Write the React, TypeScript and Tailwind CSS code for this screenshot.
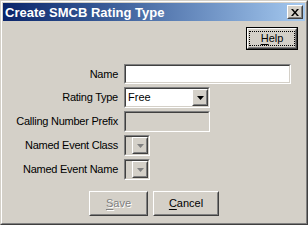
const FONT = "font-['Liberation_Sans',Arial,sans-serif]";

function Raised({ className = '', children }: { className?: string; children?: React.ReactNode }) {
  return (
    <div className={`border border-t-white border-l-white border-r-[#404040] border-b-[#404040] bg-[#d4d0c8] ${className}`}>
      <div className="h-full w-full border border-t-[#d4d0c8] border-l-[#d4d0c8] border-r-[#808080] border-b-[#808080] flex items-center justify-center">
        {children}
      </div>
    </div>
  );
}

function Sunken({ className = '', bg = 'bg-white', children }: { className?: string; bg?: string; children?: React.ReactNode }) {
  return (
    <div className={`border border-t-[#808080] border-l-[#808080] border-r-white border-b-white ${className}`}>
      <div className={`h-full w-full border border-t-[#404040] border-l-[#404040] border-r-[#d4d0c8] border-b-[#d4d0c8] flex items-center ${bg}`}>
        {children}
      </div>
    </div>
  );
}

function Arrow({ disabled = false }: { disabled?: boolean }) {
  return (
    <svg width="7" height="4" viewBox="0 0 7 4">
      <path d="M0 0H7L3.5 4Z" fill={disabled ? '#808080' : '#000'} />
    </svg>
  );
}

function Label({ children }: { children: React.ReactNode }) {
  return <span className="text-right text-[11px] tracking-[-0.25px] text-black leading-none">{children}</span>;
}

export default function App() {
  return (
    <div className={`${FONT} w-[308px] h-[225px] bg-[#d4d0c8] border border-t-[#d4d0c8] border-l-[#d4d0c8] border-r-[#404040] border-b-[#404040]`}>
      <div className="h-full w-full border border-t-white border-l-white border-r-[#808080] border-b-[#808080] flex flex-col">
        <div className="mx-px mt-px h-[18px] flex items-center justify-between bg-gradient-to-r from-[#0a246a] to-[#a6caf0] pl-[2px] pr-[2px]">
          <span className="text-white font-bold text-[13px] leading-none">Create SMCB Rating Type</span>
          <Raised className="w-[16px] h-[14px]">
            <svg width="8" height="7" viewBox="0 0 8 7">
              <path d="M0 0h2l2 2.5L6 0h2L5 3.5 8 7H6L4 4.5 2 7H0l3-3.5Z" fill="#000" />
            </svg>
          </Raised>
        </div>

        <div className="flex justify-end pr-[8px] mt-[6px]">
          <div className="border border-black">
            <Raised className="w-[50px] h-[21px]">
              <span className="border border-dotted border-black px-[11px] py-[1px] text-[11px] leading-none">
                <span className="underline underline-offset-2">H</span>elp
              </span>
            </Raised>
          </div>
        </div>

        <div className="grid grid-cols-[116px_auto] gap-x-[6px] gap-y-[3px] mt-[14px] items-center">
          <Label>Name</Label>
          <Sunken className="w-[167px] h-[20px]" />

          <Label>Rating Type</Label>
          <Sunken className="w-[86px] h-[21px]">
            <span className="flex-1 text-[11px] pl-[2px] leading-none">Free</span>
            <Raised className="w-[16px] h-[17px]">
              <Arrow />
            </Raised>
          </Sunken>

          <Label>Calling Number Prefix</Label>
          <Sunken className="w-[86px] h-[21px]" bg="bg-[#d4d0c8]" />

          <Label>Named Event Class</Label>
          <Sunken className="w-[26px] h-[21px]" bg="bg-[#d4d0c8]">
            <div className="flex-1" />
            <Raised className="w-[16px] h-[17px]">
              <Arrow disabled />
            </Raised>
          </Sunken>

          <Label>Named Event Name</Label>
          <Sunken className="w-[26px] h-[21px]" bg="bg-[#d4d0c8]">
            <div className="flex-1" />
            <Raised className="w-[16px] h-[17px]">
              <Arrow disabled />
            </Raised>
          </Sunken>
        </div>

        <div className="flex justify-center gap-[5px] mt-[11px]">
          <Raised className="w-[59px] h-[25px]">
            <span className="text-[11px] text-[#808080] [text-shadow:1px_1px_0_#fff]">
              <span className="underline underline-offset-2">S</span>ave
            </span>
          </Raised>
          <Raised className="w-[66px] h-[25px]">
            <span className="text-[11px] text-black">
              <span className="underline underline-offset-2">C</span>ancel
            </span>
          </Raised>
        </div>
      </div>
    </div>
  );
}
